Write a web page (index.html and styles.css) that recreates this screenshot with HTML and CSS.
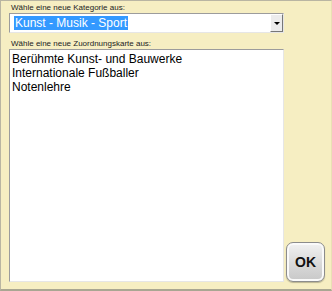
FILE: index.html
```html
<!DOCTYPE html>
<html>
<head>
<meta charset="UTF-8">
<title>Zuordnungskarte wählen</title>
<link rel="stylesheet" href="styles.css">
</head>
<body>
  <div id="frame">
    <div id="left">
      <div class="label">Wähle eine neue Kategorie aus:</div>
      <div class="combo">
        <div class="combo-text"><span class="selected">Kunst - Musik - Sport</span></div>
        <div class="combo-btn"><span class="arrow"></span></div>
      </div>
      <div class="label label2">Wähle eine neue Zuordnungskarte aus:</div>
      <div class="listbox">
        <div class="item">Berühmte Kunst- und Bauwerke</div>
        <div class="item">Internationale Fußballer</div>
        <div class="item">Notenlehre</div>
      </div>
    </div>
    <div id="right">
      <button class="ok">OK</button>
    </div>
  </div>
</body>
</html>
```

FILE: styles.css
```css
* {
  margin: 0;
  padding: 0;
  box-sizing: border-box;
}

html, body {
  width: 332px;
  height: 291px;
  background: #f6eec2;
  font-family: 'Liberation Sans', Arial, sans-serif;
  color: #000;
}

#frame {
  width: 332px;
  height: 291px;
  border-top: 1px solid #b9b5a2;
  border-left: 1px solid #b9b5a2;
  border-right: 1px solid #e9e0b4;
  border-bottom: 2px solid #a9a692;
  display: flex;
  padding: 2px 5px 7px 8px;
}

#left {
  width: 275px;
  display: flex;
  flex-direction: column;
}

.label {
  font-size: 8px;
  line-height: 10px;
  color: #222;
  padding-left: 2px;
  height: 10px;
}

.label2 {
  margin-top: 6px;
}

.combo {
  height: 20px;
  background: #fff;
  border: 1px solid #9c9c9c;
  border-right-color: #e6e6e6;
  border-bottom-color: #e6e6e6;
  display: flex;
}

.combo-text {
  flex: 1;
  padding: 2px 0 0 4px;
  font-size: 12px;
  line-height: 14px;
}

.selected {
  background: #3399ff;
  color: #fff;
  padding: 0 1px;
}

.combo-btn {
  width: 13px;
  height: 18px;
  background: #ececec;
  border: 1px solid #fff;
  border-right-color: #777;
  border-bottom-color: #777;
  display: flex;
  align-items: center;
  justify-content: center;
}

.arrow {
  width: 0;
  height: 0;
  border-left: 3px solid transparent;
  border-right: 3px solid transparent;
  border-top: 3px solid #000;
}

.listbox {
  flex: 1;
  background: #fff;
  border: 1px solid #9c9c9c;
  border-right-color: #e6e6e6;
  border-bottom-color: #e6e6e6;
  padding: 2px 0 0 2px;
}

.item {
  font-size: 12px;
  line-height: 14px;
}

#right {
  flex: 1;
  display: flex;
  align-items: flex-end;
  justify-content: flex-end;
  padding-right: 1px;
}

.ok {
  width: 39px;
  height: 40px;
  border-radius: 7px;
  border: 1px solid #8c8c8c;
  background: linear-gradient(#f2f2f2, #d9d9d9 55%, #c8c8c8);
  box-shadow: inset 0 0 0 2px #fafafa, 0 1px 1px rgba(0, 0, 0, 0.25);
  font-family: 'Liberation Sans', Arial, sans-serif;
  font-weight: bold;
  font-size: 14px;
  color: #111;
}
```
